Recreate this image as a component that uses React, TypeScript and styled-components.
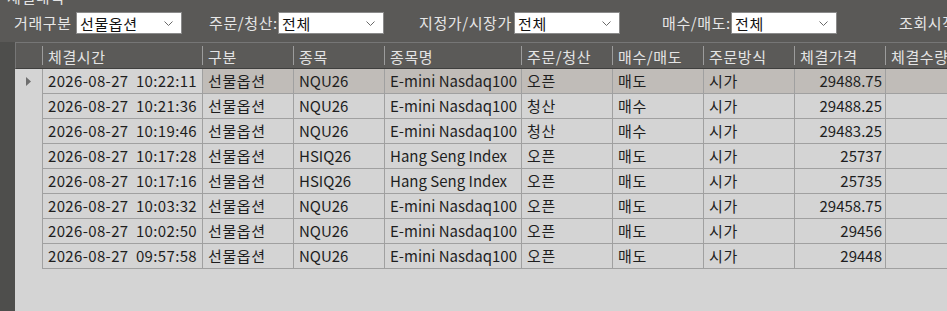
import React from "react";
import styled, { createGlobalStyle } from "styled-components";

const GlobalStyle = createGlobalStyle`
	html, body {
		margin: 0;
		padding: 0;
		background: #5a5957;
		overflow: hidden;
	}
	body {
		font-family: "Noto Sans CJK KR", "DejaVu Sans", sans-serif;
		font-size: 15px;
	}
`;

const Page = styled.div`
	display: flex;
	flex-direction: column;
	height: 311px;
	overflow: hidden;
`;

const Title = styled.div`
	margin: -12px 0 0 7px;
	height: 17px;
	line-height: 17px;
	color: #e4e4e4;
	letter-spacing: 0.6px;
`;

const FilterBar = styled.div`
	display: flex;
	align-items: center;
	height: 22px;
	margin-top: 7px;
	padding-left: 14px;
	white-space: nowrap;
`;

const Filter = styled.div<{ $offset: number }>`
	display: flex;
	align-items: center;
	margin-left: ${(p) => p.$offset}px;
`;

const Label = styled.span<{ $width: number }>`
	display: inline-block;
	width: ${(p) => p.$width}px;
	overflow: hidden;
	color: #e6e6e6;
	line-height: 22px;
	letter-spacing: 0.6px;
`;

const Select = styled.div`
	position: relative;
	display: flex;
	align-items: center;
	box-sizing: border-box;
	width: 106px;
	height: 22px;
	padding-left: 3px;
	background: #fff;
	border: 1px solid #8a8a8a;
	color: #111;
	letter-spacing: 0.6px;

	svg {
		position: absolute;
		right: 8px;
		top: 8px;
	}
`;

const Panel = styled.div`
	flex: 1;
	margin-top: 8px;
	border-left: 15px solid #4e4e4c;
	background: #d4d4d4;
	overflow: hidden;
`;

const Grid = styled.div`
	display: grid;
	grid-template-columns: 28px 160px 91px 91px 137px 91px 91px 91px 91px 91px;
	width: max-content;
`;

const HeadCell = styled.div<{ $first?: boolean }>`
	box-sizing: border-box;
	height: 27px;
	padding: 3px 0 0 5px;
	background: #5b5a58;
	color: #e4e4e4;
	border-top: 1px solid #767676;
	border-left: ${(p) => (p.$first ? "1px solid #767676" : "none")};
	border-bottom: 1px solid #3f3f3e;
	position: relative;
	white-space: nowrap;
	letter-spacing: 0.6px;

	&::after {
		content: "";
		position: absolute;
		right: 0;
		top: 3px;
		bottom: 3px;
		width: 1px;
		background: #9c9c9c;
	}
`;

const RowHead = styled.div`
	box-sizing: border-box;
	height: 25px;
	display: flex;
	align-items: center;
	padding-left: 11px;
	background: #d4d4d4;
	border-right: 1px solid #a0a0a0;
`;

const Cell = styled.div<{ $selected?: boolean; $right?: boolean; $spacing?: number }>`
	box-sizing: border-box;
	height: 25px;
	line-height: 24px;
	padding: 0 ${(p) => (p.$right ? "3px" : "0")} 0 ${(p) => (p.$right ? "0" : "5px")};
	text-align: ${(p) => (p.$right ? "right" : "left")};
	letter-spacing: ${(p) => p.$spacing ?? 0}px;
	background: ${(p) => (p.$selected ? "#c0bcb8" : "#d4d4d4")};
	color: #1e1e1e;
	border-right: 1px solid #a0a0a0;
	border-bottom: 1px solid #a0a0a0;
	white-space: nowrap;
	overflow: hidden;
`;

const Chevron = () => (
	<svg width="9" height="5" viewBox="0 0 9 5">
		<path d="M0.5 0.5 L4.5 4.5 L8.5 0.5" fill="none" stroke="#6a6a6a" strokeWidth="1" />
	</svg>
);

const RowArrow = () => (
	<svg width="6" height="9" viewBox="0 0 6 9">
		<path d="M0 0 L5 4.5 L0 9 Z" fill="#6e6e6e" />
	</svg>
);

const columns = ["체결시간", "구분", "종목", "종목명", "주문/청산", "매수/매도", "주문방식", "체결가격", "체결수량"];

// Korean text and the time stamp are a bit wider in the original font
const columnSpacing = [0.35, 0.6, 0, 0, 0.6, 0.6, 0.6, 0];

const rows = [
	["2026-08-27  10:22:11", "선물옵션", "NQU26", "E-mini Nasdaq100", "오픈", "매도", "시가", "29488.75"],
	["2026-08-27  10:21:36", "선물옵션", "NQU26", "E-mini Nasdaq100", "청산", "매수", "시가", "29488.25"],
	["2026-08-27  10:19:46", "선물옵션", "NQU26", "E-mini Nasdaq100", "청산", "매수", "시가", "29483.25"],
	["2026-08-27  10:17:28", "선물옵션", "HSIQ26", "Hang Seng Index", "오픈", "매도", "시가", "25737"],
	["2026-08-27  10:17:16", "선물옵션", "HSIQ26", "Hang Seng Index", "오픈", "매도", "시가", "25735"],
	["2026-08-27  10:03:32", "선물옵션", "NQU26", "E-mini Nasdaq100", "오픈", "매도", "시가", "29458.75"],
	["2026-08-27  10:02:50", "선물옵션", "NQU26", "E-mini Nasdaq100", "오픈", "매도", "시가", "29456"],
	["2026-08-27  09:57:58", "선물옵션", "NQU26", "E-mini Nasdaq100", "오픈", "매도", "시가", "29448"],
];

const filters = [
	{ label: "거래구분", width: 62, offset: 0, value: "선물옵션" },
	{ label: "주문/청산:", width: 69, offset: 27, value: "전체" },
	{ label: "지정가/시장가", width: 95, offset: 35, value: "전체" },
	{ label: "매수/매도:", width: 69, offset: 42, value: "전체" },
];

function App() {
	return (
		<Page>
			<GlobalStyle />
			<Title>체결내역</Title>
			<FilterBar>
				{filters.map((f) => (
					<Filter key={f.label} $offset={f.offset}>
						<Label $width={f.width}>{f.label}</Label>
						<Select>
							{f.value}
							<Chevron />
						</Select>
					</Filter>
				))}
				<Filter $offset={62}>
					<Label $width={80}>조회시작</Label>
				</Filter>
			</FilterBar>
			<Panel>
				<Grid>
					<HeadCell $first />
					{columns.map((c) => (
						<HeadCell key={c}>{c}</HeadCell>
					))}
					{rows.map((r, i) => (
						<React.Fragment key={i}>
							<RowHead>{i === 0 && <RowArrow />}</RowHead>
							{r.map((v, j) => (
								<Cell key={j} $selected={i === 0 && j > 0} $right={j === 7} $spacing={columnSpacing[j]}>
									{v.replace(/ /g, "\u00a0")}
								</Cell>
							))}
							<Cell $selected={i === 0} />
						</React.Fragment>
					))}
				</Grid>
			</Panel>
		</Page>
	);
}

export default App;
